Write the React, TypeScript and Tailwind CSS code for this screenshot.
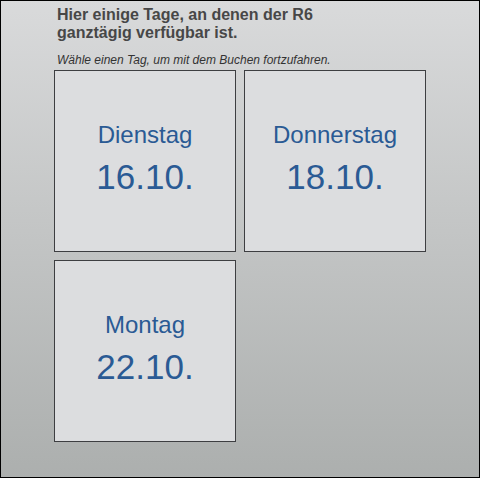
const DAYS = [
  { name: 'Dienstag', date: '16.10.' },
  { name: 'Donnerstag', date: '18.10.' },
  { name: 'Montag', date: '22.10.' },
]

export default function App() {
  return (
    <div
      className="w-[480px] h-[478px] border border-black bg-gradient-to-b from-[#d9dadb] to-[#acafae] pl-[53px] pt-[5px]"
      style={{ fontFamily: '"Liberation Sans", Arial, sans-serif' }}
    >
      <div className="pl-[3px]">
        <h1 className="text-[16px] leading-[18px] font-bold text-[#474747]">
          Hier einige Tage, an denen der R6
          <br />
          ganztägig verfügbar ist.
        </h1>
        <p className="mt-[11px] text-[12px] leading-[14px] italic text-[#333]">
          Wähle einen Tag, um mit dem Buchen fortzufahren.
        </p>
      </div>

      {/* day tiles */}
      <div className="mt-[3px] grid grid-cols-[182px_182px] gap-[8px]">
        {DAYS.map(d => (
          <button
            key={d.date}
            className="h-[182px] border border-[#3d3e41] bg-[#dcdddf] flex flex-col items-center justify-center pb-[6px] text-[#2a5a94]"
          >
            <span className="text-[24px] leading-[24px]">{d.name}</span>
            <span className="mt-[12px] text-[35px] leading-[35px]">{d.date}</span>
          </button>
        ))}
      </div>
    </div>
  )
}
